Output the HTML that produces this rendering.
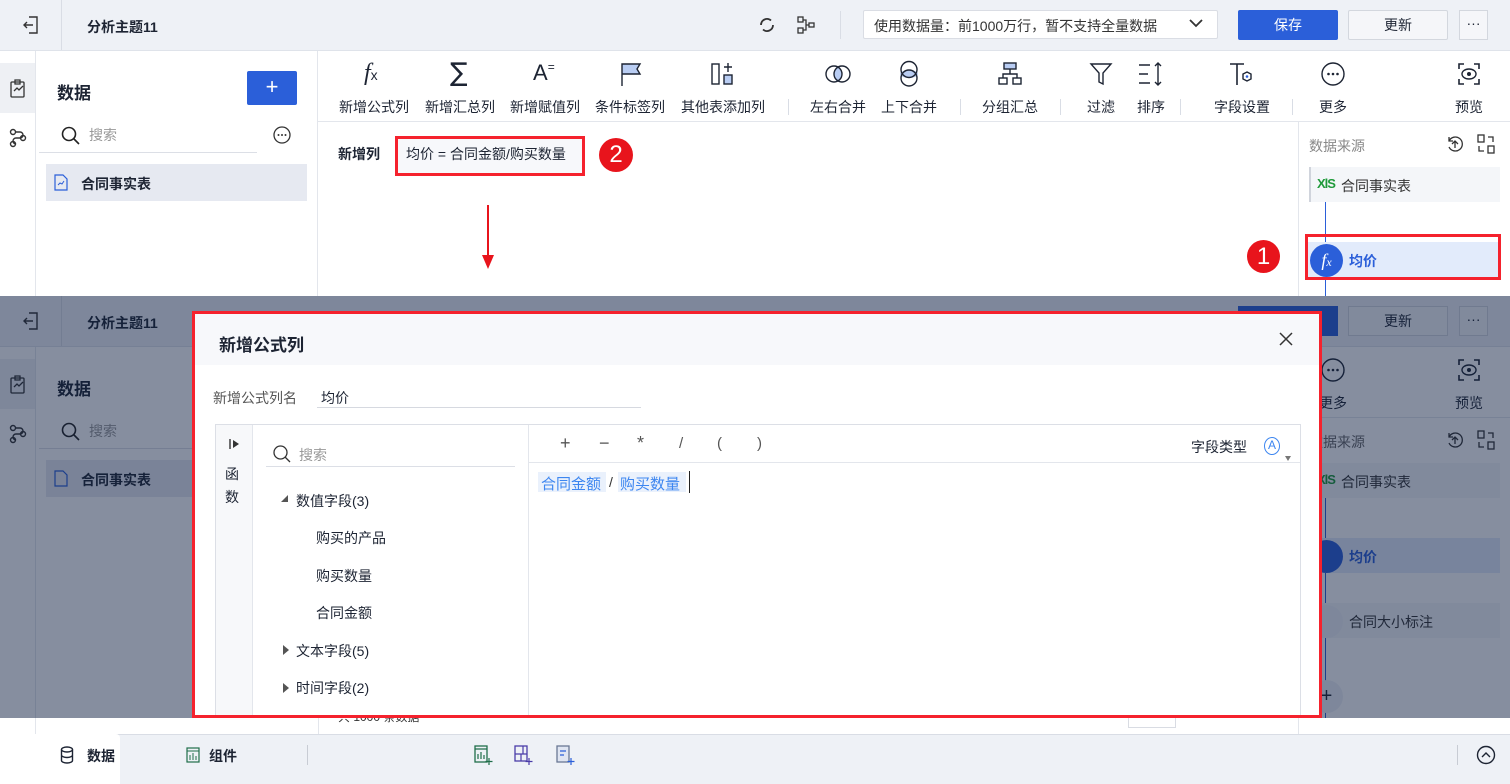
<!DOCTYPE html>
<html><head><meta charset="utf-8"><style>
*{margin:0;padding:0;box-sizing:border-box}
body{width:1510px;height:784px;overflow:hidden;position:relative;background:#fff;font-family:"Liberation Sans","Noto Sans CJK SC",sans-serif;font-size:14px;color:#1d2433}
.a{position:absolute}
.hdr{background:#eef1f6;border-bottom:1px solid #dfe3ea}
.t{position:absolute;white-space:nowrap}
.b{font-weight:bold}
.lbl{font-size:14px;color:#1d2433;text-align:center;width:90px;margin-left:-45px}
svg{position:absolute;overflow:visible}
.sep{position:absolute;width:1px;background:#d9dde5}
.red{border:3px solid #f5222d}
</style></head><body>

<!-- ================= TOP SCREEN ================= -->
<div class="a hdr" style="left:0;top:0;width:1510px;height:51px"></div>
<div class="sep" style="left:61px;top:0;height:50px"></div>
<svg style="left:22px;top:15px" width="18" height="20" viewBox="0 0 18 20"><path d="M7 2h8v16H7M11 10H2M5 7l-3 3 3 3" fill="none" stroke="#333" stroke-width="1.4"/></svg>
<div class="t b" style="left:87px;top:17px;font-size:14px">分析主题11</div>
<svg style="left:758px;top:16px" width="18" height="18" viewBox="0 0 18 18"><path d="M15 9a6 6 0 0 1-10 4.5M3 9a6 6 0 0 1 10-4.5" fill="none" stroke="#333" stroke-width="1.8"/></svg>
<svg style="left:797px;top:16px" width="20" height="18" viewBox="0 0 20 18"><rect x="1" y="1" width="5" height="5" fill="none" stroke="#333" stroke-width="1.3"/><rect x="1" y="12" width="5" height="5" fill="none" stroke="#333" stroke-width="1.3"/><rect x="12" y="7" width="5" height="4" fill="none" stroke="#333" stroke-width="1.3"/><path d="M6 4h3v10H6M9 9h3" fill="none" stroke="#333" stroke-width="1.3"/></svg>
<div class="sep" style="left:840px;top:11px;height:28px"></div>
<div class="a" style="left:863px;top:10px;width:355px;height:29px;background:#fff;border:1px solid #dadde4;border-radius:2px"></div>
<div class="t" style="left:874px;top:16px;font-size:14px;color:#333">使用数据量：前1000万行，暂不支持全量数据</div>
<svg style="left:1189px;top:18px" width="14" height="10" viewBox="0 0 14 10"><path d="M1 2l6 6 6-6" fill="none" stroke="#333" stroke-width="1.8"/></svg>
<div class="a" style="left:1238px;top:10px;width:100px;height:30px;background:#2b5fd9;border-radius:2px;color:#fff;text-align:center;line-height:30px;font-size:14px">保存</div>
<div class="a" style="left:1348px;top:10px;width:100px;height:30px;background:#f5f6f9;border:1px solid #d3d7de;border-radius:2px;text-align:center;line-height:28px;font-size:14px">更新</div>
<div class="a" style="left:1459px;top:10px;width:29px;height:30px;background:#f5f6f9;border:1px solid #d3d7de;text-align:center;line-height:24px;font-size:14px">···</div>

<!-- left icon column -->
<div class="a" style="left:0;top:51px;width:36px;height:245px;background:#fff;border-right:1px solid #e3e6ec"></div>
<div class="a" style="left:0;top:63px;width:35px;height:50px;background:#eef0f4"></div>
<svg style="left:9px;top:79px" width="18" height="20" viewBox="0 0 18 20"><rect x="2" y="3" width="13" height="15" rx="1" fill="none" stroke="#333" stroke-width="1.3"/><path d="M6 1h5v4H6zM5 12l3-3 2 2 4-4" fill="none" stroke="#333" stroke-width="1.3"/></svg>
<svg style="left:9px;top:128px" width="18" height="20" viewBox="0 0 18 20"><circle cx="4" cy="4" r="2.5" fill="none" stroke="#333" stroke-width="1.4"/><circle cx="14" cy="10" r="2.5" fill="none" stroke="#333" stroke-width="1.4"/><circle cx="4" cy="16" r="2.5" fill="none" stroke="#333" stroke-width="1.4"/><path d="M6 4h5a3 3 0 0 1 0 6H7a3 3 0 0 0 0 6" fill="none" stroke="#333" stroke-width="1.4"/></svg>

<!-- data panel -->
<div class="a" style="left:36px;top:51px;width:282px;height:245px;background:#fff;border-right:1px solid #e3e6ec"></div>
<div class="t b" style="left:57px;top:79px;font-size:17px">数据</div>
<div class="a" style="left:247px;top:71px;width:50px;height:34px;background:#2b5fd9;border-radius:2px;color:#fff;text-align:center;line-height:32px;font-size:22px">+</div>
<svg style="left:61px;top:126px" width="20" height="20" viewBox="0 0 20 20"><circle cx="8" cy="8" r="6.5" fill="none" stroke="#222" stroke-width="1.6"/><path d="M13 13l5 5" stroke="#222" stroke-width="1.6"/></svg>
<div class="t" style="left:89px;top:125px;color:#999">搜索</div>
<div class="a" style="left:39px;top:152px;width:218px;height:1px;background:#dcdfe6"></div>
<svg style="left:273px;top:126px" width="18" height="18" viewBox="0 0 18 18"><circle cx="9" cy="9" r="8" fill="none" stroke="#333" stroke-width="1.3"/><circle cx="5.5" cy="9" r="1" fill="#333"/><circle cx="9" cy="9" r="1" fill="#333"/><circle cx="12.5" cy="9" r="1" fill="#333"/></svg>
<div class="a" style="left:46px;top:164px;width:261px;height:37px;background:#e6e9f1"></div>
<svg style="left:54px;top:174px" width="14" height="17" viewBox="0 0 14 17"><path d="M1 1h8l4 4v11H1z" fill="none" stroke="#2b5fd9" stroke-width="1.2"/><path d="M4 11l2-2 2 1 2-3" fill="none" stroke="#2b5fd9" stroke-width="1"/></svg>
<div class="t b" style="left:81px;top:174px;font-size:14px">合同事实表</div>

<!-- toolbar -->
<div class="a" style="left:318px;top:121px;width:1192px;height:1px;background:#e3e6ec"></div>
<div class="t" style="left:364px;top:60px;font-size:24px;font-style:italic;font-family:'Liberation Serif',serif">f<span style="font-size:14px;font-style:normal;font-family:'Liberation Sans'">x</span></div>
<div class="t" style="left:450px;top:58px;font-size:26px;font-family:'DejaVu Sans'">∑</div>
<div class="t" style="left:533px;top:60px;font-size:22px">A<span style="font-size:12px;vertical-align:top">=</span></div>
<svg style="left:620px;top:62px" width="22" height="24" viewBox="0 0 22 24"><path d="M2 24V2h18l-3 5 3 5H2" fill="#b9cdf3" stroke="#1d2433" stroke-width="1.4"/></svg>
<svg style="left:711px;top:62px" width="24" height="24" viewBox="0 0 24 24"><rect x="1" y="2" width="7" height="20" fill="none" stroke="#1d2433" stroke-width="1.4"/><rect x="13" y="13" width="8" height="9" fill="#b9cdf3" stroke="#1d2433" stroke-width="1.4"/><path d="M17 1v9M13 5h8" stroke="#1d2433" stroke-width="1.4"/></svg>
<svg style="left:825px;top:62px" width="26" height="24" viewBox="0 0 26 24"><ellipse cx="13" cy="12" rx="3.5" ry="8" fill="#b9cdf3"/><circle cx="9" cy="12" r="8" fill="none" stroke="#1d2433" stroke-width="1.4"/><circle cx="17" cy="12" r="8" fill="none" stroke="#1d2433" stroke-width="1.4"/></svg>
<svg style="left:897px;top:60px" width="24" height="28" viewBox="0 0 24 28"><ellipse cx="12" cy="14" rx="9" ry="4" fill="#b9cdf3"/><circle cx="12" cy="9.5" r="8" fill="none" stroke="#1d2433" stroke-width="1.4"/><circle cx="12" cy="18" r="8" fill="none" stroke="#1d2433" stroke-width="1.4"/></svg>
<svg style="left:998px;top:62px" width="24" height="24" viewBox="0 0 24 24"><rect x="6" y="1" width="12" height="6" fill="#b9cdf3" stroke="#1d2433" stroke-width="1.4"/><rect x="1" y="16" width="8" height="6" fill="none" stroke="#1d2433" stroke-width="1.4"/><rect x="15" y="16" width="8" height="6" fill="none" stroke="#1d2433" stroke-width="1.4"/><path d="M12 7v5M5 16v-4h14v4" fill="none" stroke="#1d2433" stroke-width="1.4"/></svg>
<svg style="left:1090px;top:63px" width="22" height="22" viewBox="0 0 22 22"><path d="M1 1h20l-8 9v11l-4-2V10z" fill="none" stroke="#1d2433" stroke-width="1.4"/></svg>
<svg style="left:1138px;top:62px" width="26" height="24" viewBox="0 0 26 24"><path d="M1 3h11M1 12h9M1 21h11M20 1v22M17 4l3-3 3 3M17 20l3 3 3-3" fill="none" stroke="#1d2433" stroke-width="1.4"/></svg>
<svg style="left:1229px;top:62px" width="26" height="24" viewBox="0 0 26 24"><path d="M1 2h14M8 2v21" stroke="#1d2433" stroke-width="1.6"/><path d="M18 10l4 2v5l-4 2-4-2v-5z" fill="none" stroke="#1d2433" stroke-width="1.4"/><circle cx="18" cy="14.5" r="1.3" fill="#2b5fd9"/></svg>
<svg style="left:1321px;top:62px" width="24" height="24" viewBox="0 0 24 24"><circle cx="12" cy="12" r="11" fill="none" stroke="#1d2433" stroke-width="1.4"/><circle cx="7.5" cy="12" r="1.3" fill="#1d2433"/><circle cx="12" cy="12" r="1.3" fill="#1d2433"/><circle cx="16.5" cy="12" r="1.3" fill="#1d2433"/></svg>
<svg style="left:1458px;top:63px" width="22" height="22" viewBox="0 0 22 22"><path d="M1 6V1h5M16 1h5v5M21 16v5h-5M6 21H1v-5" fill="none" stroke="#1d2433" stroke-width="1.6"/><ellipse cx="11" cy="11" rx="7" ry="5" fill="none" stroke="#1d2433" stroke-width="1.4"/><circle cx="11" cy="11" r="2" fill="#1d2433"/></svg>
<div class="t lbl" style="left:374px;top:97px">新增公式列</div>
<div class="t lbl" style="left:460px;top:97px">新增汇总列</div>
<div class="t lbl" style="left:545px;top:97px">新增赋值列</div>
<div class="t lbl" style="left:630px;top:97px">条件标签列</div>
<div class="t lbl" style="left:723px;top:97px">其他表添加列</div>
<div class="sep" style="left:788px;top:99px;height:16px"></div>
<div class="t lbl" style="left:838px;top:97px">左右合并</div>
<div class="t lbl" style="left:909px;top:97px">上下合并</div>
<div class="sep" style="left:960px;top:99px;height:16px"></div>
<div class="t lbl" style="left:1010px;top:97px">分组汇总</div>
<div class="sep" style="left:1060px;top:99px;height:16px"></div>
<div class="t lbl" style="left:1101px;top:97px">过滤</div>
<div class="t lbl" style="left:1151px;top:97px">排序</div>
<div class="sep" style="left:1180px;top:99px;height:16px"></div>
<div class="t lbl" style="left:1242px;top:97px">字段设置</div>
<div class="sep" style="left:1292px;top:99px;height:16px"></div>
<div class="t lbl" style="left:1333px;top:97px">更多</div>
<div class="t lbl" style="left:1469px;top:97px">预览</div>

<!-- content top -->
<div class="t b" style="left:338px;top:144px;font-size:14px">新增列</div>
<div class="a red" style="left:395px;top:136px;width:190px;height:40px;background:#f7f8fb"></div>
<div class="t" style="left:406px;top:144px;font-size:14px">均价 = 合同金额/购买数量</div>
<div class="a" style="left:599px;top:138px;width:34px;height:34px;border-radius:50%;background:#e8141c;color:#fff;text-align:center;line-height:34px;font-size:24px">2</div>
<div class="a" style="left:487px;top:205px;width:2px;height:55px;background:#e8141c"></div>
<svg style="left:482px;top:255px" width="12" height="14" viewBox="0 0 12 14"><path d="M0 0h12L6 14z" fill="#e8141c"/></svg>

<!-- right panel top -->
<div class="a" style="left:1298px;top:122px;width:1px;height:174px;background:#e3e6ec"></div>
<div class="t" style="left:1309px;top:136px;color:#888">数据来源</div>
<svg style="left:1446px;top:135px" width="18" height="18" viewBox="0 0 18 18"><path d="M3 6a7 7 0 1 1 0 6M3 2v4h4M9 13V6M6 9l3-3 3 3" fill="none" stroke="#333" stroke-width="1.3"/></svg>
<svg style="left:1477px;top:134px" width="18" height="20" viewBox="0 0 18 20"><rect x="1" y="1" width="6" height="7" fill="none" stroke="#333" stroke-width="1.3"/><rect x="11" y="12" width="6" height="7" fill="none" stroke="#333" stroke-width="1.3"/><path d="M11 3h5v5M7 17H2v-5" fill="none" stroke="#333" stroke-width="1.3"/></svg>
<div class="a" style="left:1309px;top:167px;width:191px;height:35px;background:#f4f6f9;border-left:2px solid #d0d4dc"></div>
<div class="t b" style="left:1317px;top:176px;color:#1f9a3a;font-size:13px;letter-spacing:-1px">XlS</div>
<div class="t" style="left:1341px;top:176px;color:#333">合同事实表</div>
<div class="a" style="left:1325px;top:202px;width:1px;height:94px;background:#2b5fd9"></div>
<div class="a red" style="left:1305px;top:234px;width:196px;height:46px"></div>
<div class="a" style="left:1308px;top:242px;width:190px;height:35px;background:#e2ebfb"></div>
<div class="a" style="left:1310px;top:244px;width:33px;height:33px;border-radius:50%;background:#2b5fd9;color:#fff;text-align:center;line-height:32px;font-size:18px;font-style:italic;font-family:'Liberation Serif',serif">f<span style="font-size:12px">x</span></div>
<div class="t b" style="left:1349px;top:251px;color:#2b5fd9">均价</div>
<div class="a" style="left:1247px;top:240px;width:33px;height:33px;border-radius:50%;background:#e8141c;color:#fff;text-align:center;line-height:33px;font-size:24px">1</div>

<!-- ================= BOTTOM SCREEN ================= -->
<div class="a" style="left:0;top:296px;width:1510px;height:488px;background:#fff"></div>
<div class="a hdr" style="left:0;top:296px;width:1510px;height:51px"></div>
<div class="sep" style="left:61px;top:296px;height:50px"></div>
<svg style="left:22px;top:311px" width="18" height="20" viewBox="0 0 18 20"><path d="M7 2h8v16H7M11 10H2M5 7l-3 3 3 3" fill="none" stroke="#333" stroke-width="1.4"/></svg>
<div class="t b" style="left:87px;top:313px">分析主题11</div>
<div class="a" style="left:1238px;top:306px;width:100px;height:30px;background:#2b5fd9"></div>
<div class="a" style="left:1348px;top:306px;width:100px;height:30px;background:#f5f6f9;border:1px solid #d3d7de;text-align:center;line-height:28px">更新</div>
<div class="a" style="left:1459px;top:306px;width:29px;height:30px;background:#f5f6f9;border:1px solid #d3d7de;text-align:center;line-height:24px">···</div>
<div class="a" style="left:0;top:359px;width:35px;height:50px;background:#eef0f4"></div>
<div class="a" style="left:35px;top:347px;width:1px;height:388px;background:#e3e6ec"></div>
<svg style="left:9px;top:375px" width="18" height="20" viewBox="0 0 18 20"><rect x="2" y="3" width="13" height="15" rx="1" fill="none" stroke="#333" stroke-width="1.3"/><path d="M6 1h5v4H6zM5 12l3-3 2 2 4-4" fill="none" stroke="#333" stroke-width="1.3"/></svg>
<svg style="left:9px;top:424px" width="18" height="20" viewBox="0 0 18 20"><circle cx="4" cy="4" r="2.5" fill="none" stroke="#333" stroke-width="1.4"/><circle cx="14" cy="10" r="2.5" fill="none" stroke="#333" stroke-width="1.4"/><circle cx="4" cy="16" r="2.5" fill="none" stroke="#333" stroke-width="1.4"/><path d="M6 4h5a3 3 0 0 1 0 6H7a3 3 0 0 0 0 6" fill="none" stroke="#333" stroke-width="1.4"/></svg>
<div class="t b" style="left:57px;top:375px;font-size:17px">数据</div>
<svg style="left:61px;top:422px" width="20" height="20" viewBox="0 0 20 20"><circle cx="8" cy="8" r="6.5" fill="none" stroke="#222" stroke-width="1.6"/><path d="M13 13l5 5" stroke="#222" stroke-width="1.6"/></svg>
<div class="t" style="left:89px;top:421px;color:#999">搜索</div>
<div class="a" style="left:39px;top:448px;width:160px;height:1px;background:#dcdfe6"></div>
<div class="a" style="left:46px;top:460px;width:150px;height:37px;background:#e6e9f1"></div>
<svg style="left:54px;top:470px" width="14" height="17" viewBox="0 0 14 17"><path d="M1 1h8l4 4v11H1z" fill="none" stroke="#2b5fd9" stroke-width="1.2"/></svg>
<div class="t b" style="left:81px;top:470px">合同事实表</div>
<div class="a" style="left:318px;top:347px;width:1px;height:388px;background:#e3e6ec"></div>
<div class="a" style="left:318px;top:417px;width:1192px;height:1px;background:#e3e6ec"></div>
<svg style="left:1321px;top:358px" width="24" height="24" viewBox="0 0 24 24"><circle cx="12" cy="12" r="11" fill="none" stroke="#1d2433" stroke-width="1.4"/><circle cx="7.5" cy="12" r="1.3" fill="#1d2433"/><circle cx="12" cy="12" r="1.3" fill="#1d2433"/><circle cx="16.5" cy="12" r="1.3" fill="#1d2433"/></svg>
<svg style="left:1458px;top:359px" width="22" height="22" viewBox="0 0 22 22"><path d="M1 6V1h5M16 1h5v5M21 16v5h-5M6 21H1v-5" fill="none" stroke="#1d2433" stroke-width="1.6"/><ellipse cx="11" cy="11" rx="7" ry="5" fill="none" stroke="#1d2433" stroke-width="1.4"/><circle cx="11" cy="11" r="2" fill="#1d2433"/></svg>
<div class="t lbl" style="left:1333px;top:393px">更多</div>
<div class="t lbl" style="left:1469px;top:393px">预览</div>
<div class="a" style="left:1298px;top:418px;width:1px;height:317px;background:#e3e6ec"></div>
<div class="t" style="left:1309px;top:432px;color:#666">数据来源</div>
<svg style="left:1446px;top:431px" width="18" height="18" viewBox="0 0 18 18"><path d="M3 6a7 7 0 1 1 0 6M3 2v4h4M9 13V6M6 9l3-3 3 3" fill="none" stroke="#333" stroke-width="1.3"/></svg>
<svg style="left:1477px;top:430px" width="18" height="20" viewBox="0 0 18 20"><rect x="1" y="1" width="6" height="7" fill="none" stroke="#333" stroke-width="1.3"/><rect x="11" y="12" width="6" height="7" fill="none" stroke="#333" stroke-width="1.3"/><path d="M11 3h5v5M7 17H2v-5" fill="none" stroke="#333" stroke-width="1.3"/></svg>
<div class="a" style="left:1309px;top:463px;width:191px;height:35px;background:#f4f6f9"></div>
<div class="t b" style="left:1317px;top:472px;color:#1f9a3a;font-size:13px;letter-spacing:-1px">XlS</div>
<div class="t" style="left:1341px;top:472px;color:#333">合同事实表</div>
<div class="a" style="left:1325px;top:498px;width:1px;height:220px;background:#2b5fd9"></div>
<div class="a" style="left:1308px;top:538px;width:192px;height:35px;background:#e2ebfb"></div>
<div class="a" style="left:1310px;top:540px;width:33px;height:33px;border-radius:50%;background:#2b5fd9"></div>
<div class="t b" style="left:1349px;top:547px;color:#2b5fd9">均价</div>
<div class="a" style="left:1308px;top:603px;width:192px;height:35px;background:#f4f6f9"></div>
<div class="a" style="left:1310px;top:605px;width:33px;height:33px;border-radius:50%;background:#eef1f6"></div>
<div class="t" style="left:1349px;top:612px;color:#333">合同大小标注</div>
<div class="a" style="left:1310px;top:680px;width:33px;height:33px;border-radius:50%;background:#eef1f6;text-align:center;line-height:33px;font-size:20px">+</div>
<div class="t" style="left:338px;top:708px;font-size:12px;color:#333">共 1000 条数据</div>
<div class="a" style="left:1128px;top:710px;width:48px;height:18px;border:1px solid #d9dce3"></div>

<!-- overlay -->
<div class="a" style="left:0;top:296px;width:1510px;height:422px;background:rgba(13,29,63,0.5)"></div>

<!-- bottom bar -->
<div class="a" style="left:0;top:734px;width:1510px;height:50px;background:#eef1f6;border-top:1px solid #d9dde5"></div>
<div class="a" style="left:0;top:734px;width:120px;height:50px;background:#fff;border-top-right-radius:4px"></div>
<svg style="left:60px;top:746px" width="14" height="18" viewBox="0 0 14 18"><ellipse cx="7" cy="3.5" rx="5.5" ry="2.5" fill="none" stroke="#1d2433" stroke-width="1.4"/><path d="M1.5 3.5v11c0 1.4 2.5 2.5 5.5 2.5s5.5-1.1 5.5-2.5v-11M1.5 9c0 1.4 2.5 2.5 5.5 2.5s5.5-1.1 5.5-2.5" fill="none" stroke="#1d2433" stroke-width="1.4"/></svg>
<div class="t b" style="left:87px;top:746px">数据</div>
<svg style="left:186px;top:747px" width="14" height="16" viewBox="0 0 14 16"><rect x="1" y="1" width="12" height="14" fill="none" stroke="#1f6e4a" stroke-width="1.2"/><path d="M4 13V8M7 13V6M10 13V9M1 4h12" stroke="#1f6e4a" stroke-width="1"/></svg>
<div class="t b" style="left:209px;top:746px">组件</div>
<div class="sep" style="left:307px;top:745px;height:20px;background:#c8ccd4"></div>
<svg style="left:474px;top:745px" width="18" height="20" viewBox="0 0 18 20"><rect x="1" y="1" width="12" height="16" fill="none" stroke="#1f6e4a" stroke-width="1.3"/><path d="M4 14V9M7 14V7M10 14V10M15 13v7M11.5 16.5h7M1 4h12" stroke="#1f6e4a" stroke-width="1.2"/></svg>
<svg style="left:514px;top:745px" width="18" height="20" viewBox="0 0 18 20"><rect x="1" y="1" width="12" height="15" fill="none" stroke="#4a3ca8" stroke-width="1.3"/><path d="M1 9h12M7 9v7M9 1v8M15 13v7M11.5 16.5h7" stroke="#4a3ca8" stroke-width="1.2"/></svg>
<svg style="left:556px;top:745px" width="18" height="20" viewBox="0 0 18 20"><rect x="1" y="1" width="12" height="16" fill="#dfe5f2" stroke="#6a7894" stroke-width="1.3"/><path d="M4 6h6M4 10h4M15 13v7M11.5 16.5h7" stroke="#2b5fd9" stroke-width="1.2"/></svg>
<div class="sep" style="left:1457px;top:745px;height:20px;background:#c8ccd4"></div>
<svg style="left:1476px;top:745px" width="20" height="20" viewBox="0 0 20 20"><circle cx="10" cy="10" r="8.5" fill="none" stroke="#1d2433" stroke-width="1.4"/><path d="M6 12l4-4 4 4" fill="none" stroke="#1d2433" stroke-width="1.4"/></svg>

<!-- ================= MODAL ================= -->
<div class="a red" style="left:192px;top:311px;width:1130px;height:407px;background:#fff;overflow:hidden">
  <div class="a" style="left:0;top:0;width:1124px;height:51px;background:#f7f8fb"></div>
  <div class="t b" style="left:24px;top:17px;font-size:17px">新增公式列</div>
  <svg style="left:1084px;top:18px" width="14" height="14" viewBox="0 0 14 14"><path d="M1 1l12 12M13 1L1 13" stroke="#333" stroke-width="1.5"/></svg>
  <div class="t" style="left:18px;top:74px;color:#555;font-size:14px">新增公式列名</div>
  <div class="t" style="left:126px;top:74px;font-size:14px">均价</div>
  <div class="a" style="left:122px;top:93px;width:324px;height:1px;background:#d6d9e0"></div>
  <div class="a" style="left:20px;top:110px;width:1086px;height:300px;border:1px solid #dcdfe6"></div>
  <div class="a" style="left:21px;top:111px;width:37px;height:300px;background:#f7f8fa;border-right:1px solid #e3e6ec"></div>
  <svg style="left:34px;top:124px" width="12" height="12" viewBox="0 0 12 12"><path d="M1 1v10" stroke="#333" stroke-width="1.4"/><path d="M4 2l6 4-6 4z" fill="#333"/></svg>
  <div class="t" style="left:30px;top:150px;font-size:14px">函</div>
  <div class="t" style="left:30px;top:173px;font-size:14px">数</div>
  <svg style="left:78px;top:131px" width="18" height="18" viewBox="0 0 18 18"><circle cx="7.5" cy="7.5" r="6.5" fill="none" stroke="#333" stroke-width="1.3"/><path d="M12 12l5 5" stroke="#333" stroke-width="1.3"/></svg>
  <div class="t" style="left:104px;top:131px;color:#999">搜索</div>
  <div class="a" style="left:71px;top:152px;width:249px;height:1px;background:#dcdfe6"></div>
  <svg style="left:86px;top:181px" width="8" height="8" viewBox="0 0 8 8"><path d="M7 0v7H0z" fill="#555"/></svg>
  <div class="t" style="left:101px;top:177px">数值字段(3)</div>
  <div class="t" style="left:121px;top:214px">购买的产品</div>
  <div class="t" style="left:121px;top:252px">购买数量</div>
  <div class="t" style="left:121px;top:289px">合同金额</div>
  <svg style="left:88px;top:331px" width="6" height="10" viewBox="0 0 6 10"><path d="M0 0l6 5-6 5z" fill="#555"/></svg>
  <div class="t" style="left:101px;top:327px">文本字段(5)</div>
  <svg style="left:88px;top:369px" width="6" height="10" viewBox="0 0 6 10"><path d="M0 0l6 5-6 5z" fill="#555"/></svg>
  <div class="t" style="left:101px;top:364px">时间字段(2)</div>
  <div class="a" style="left:333px;top:111px;width:1px;height:300px;background:#e3e6ec"></div>
  <div class="a" style="left:334px;top:148px;width:771px;height:1px;background:#e3e6ec"></div>
  <div class="t" style="left:365px;top:119px;font-size:18px;color:#555">+</div>
  <div class="t" style="left:404px;top:119px;font-size:18px;color:#555">−</div>
  <div class="t" style="left:442px;top:119px;font-size:18px;color:#555">*</div>
  <div class="t" style="left:484px;top:121px;font-size:15px;color:#555">/</div>
  <div class="t" style="left:522px;top:121px;font-size:15px;color:#555">(</div>
  <div class="t" style="left:562px;top:121px;font-size:15px;color:#555">)</div>
  <div class="t" style="left:996px;top:123px;font-size:14px">字段类型</div>
  <div class="a" style="left:1069px;top:123px;width:16px;height:18px;border:1.5px solid #3d86f0;border-radius:50%;color:#3d86f0;font-size:12px;text-align:center;line-height:15px">A</div>
  <svg style="left:1090px;top:142px" width="6" height="5" viewBox="0 0 6 5"><path d="M0 0h6L3 5z" fill="#777"/></svg>
  <div class="a" style="left:343px;top:158px;width:68px;height:20px;background:#eaf1fc"></div>
  <div class="t" style="left:346px;top:159px;color:#3d86f0;font-size:15px">合同金额</div>
  <div class="t" style="left:414px;top:160px;color:#333;font-size:14px">/</div>
  <div class="a" style="left:423px;top:158px;width:68px;height:20px;background:#eaf1fc"></div>
  <div class="t" style="left:425px;top:159px;color:#3d86f0;font-size:15px">购买数量</div>
  <div class="a" style="left:494px;top:157px;width:1px;height:22px;background:#222"></div>
</div>
</body></html>
